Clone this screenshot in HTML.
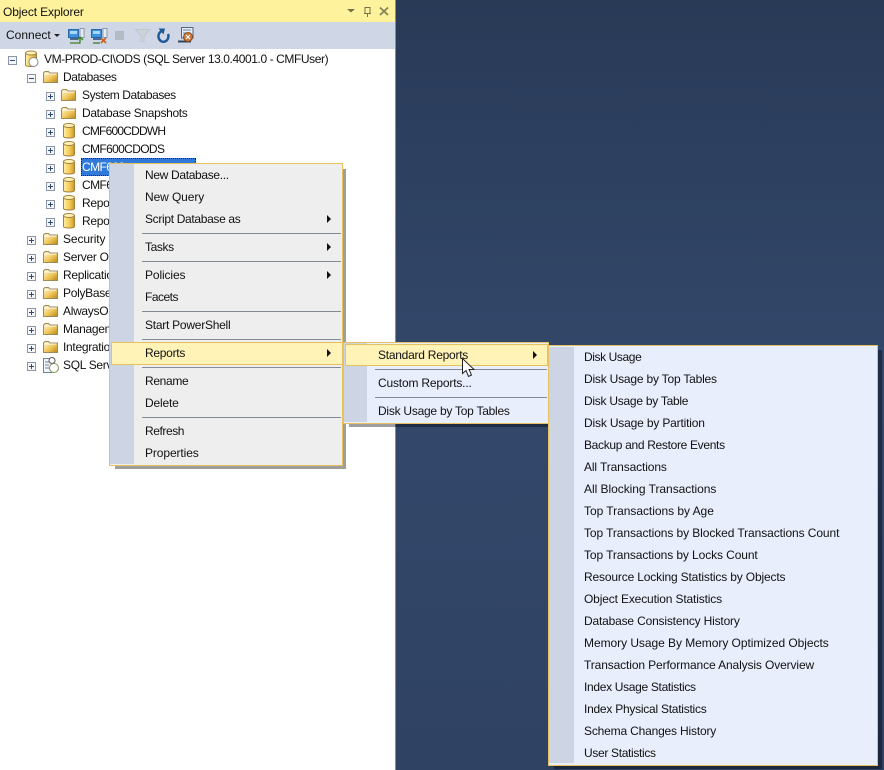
<!DOCTYPE html>
<html><head><meta charset="utf-8">
<style>
html,body{margin:0;padding:0}
body{width:884px;height:770px;overflow:hidden;position:relative;background:linear-gradient(#293a57,#33486b 50%,#2f4263);font:12px/16px "Liberation Sans",sans-serif;color:#111}
div{position:absolute}
.t{white-space:nowrap;position:absolute}
.sep{position:absolute;height:1px;background:#858b96}
.menu{position:absolute;border:1px solid #e8c15f;box-sizing:border-box}
.strip{position:absolute;background:#cdd5e4}
.arr{position:absolute;width:0;height:0;border-left:4px solid #111;border-top:4px solid transparent;border-bottom:4px solid transparent}
.sh{position:absolute;background:rgba(0,0,0,.38)}
svg{position:absolute;overflow:visible}
</style></head><body>
<svg width="0" height="0" style="position:absolute"><defs>
<linearGradient id="fg" x1="0" y1="0" x2="1" y2="1"><stop offset="0" stop-color="#fff8d8"/><stop offset=".55" stop-color="#f0c75a"/><stop offset="1" stop-color="#b8861b"/></linearGradient>
<linearGradient id="dg" x1="0" y1="0" x2="1" y2="0"><stop offset="0" stop-color="#fff0a8"/><stop offset=".6" stop-color="#f2c650"/><stop offset="1" stop-color="#c9952a"/></linearGradient>
<g id="folder"><path d="M.5 3V12.500H14.500V3H7L5.500 1.500H2L.5 3Z" fill="url(#fg)" stroke="#a08a55"/><path d="M1.500 4H13.500" stroke="#fff" fill="none"/></g>
<g id="db"><path d="M.5 2.500V13.500C.5 15.500 11.500 15.500 11.500 13.500V2.500Z" fill="url(#dg)" stroke="#a4823c"/><ellipse cx="6" cy="2.500" rx="5.500" ry="2" fill="#fff3b8" stroke="#a4823c"/></g>
<g id="plus" transform="translate(0,2)"><rect x=".5" y=".5" width="8" height="8" fill="#f4f6fa" stroke="#8a96a8"/><path d="M2 4.500H7M4.500 2V7" stroke="#2f4a70"/></g>
<g id="minus" transform="translate(0,2)"><rect x=".5" y=".5" width="8" height="8" fill="#f4f6fa" stroke="#8a96a8"/><path d="M2 4.500H7" stroke="#2f4a70"/></g>
<g id="srv"><rect x=".5" y="1.500" width="10" height="8" fill="#3e93e0" stroke="#2a66a8"/><rect x="2" y="3" width="7" height="3" fill="#a8d6f7"/><path d="M2 11H10" stroke="#4a6a92" stroke-width="2"/><rect x="12" y=".5" width="4" height="9" fill="#e6ecf3" stroke="#8a98ac"/></g>
</defs></svg>

<!-- left panel -->
<div style="left:0;top:0;width:395px;height:770px;background:#fff"></div>
<div style="left:395px;top:0;width:1px;height:770px;background:#7f8ea6"></div>
<div style="left:0;top:0;width:395px;height:22px;background:#fff29d"></div>
<div style="left:0;top:22px;width:395px;height:27px;background:#cfd6e5"></div>
<span class="t" style="left:3px;top:4px;letter-spacing:-.13px">Object Explorer</span>
<svg style="left:0;top:0" width="395" height="49">
<path d="M347 9H355L351 12.500Z" fill="#76734a"/>
<path d="M365 7.500H370V13.500H365ZM364 13.500H371M367.500 14V17" fill="none" stroke="#76734a"/>
<path d="M380 7.500L388 15M388 7.500L380 15" stroke="#84815c" stroke-width="1.800"/>
<path d="M54 34H60L57 37Z" fill="#222"/>
<use href="#srv" x="68" y="28"/><path d="M70 43H80V38M77 40L80 37L83 40" fill="none" stroke="#3e7d24" stroke-width="1.300"/>
<use href="#srv" x="91" y="28"/><path d="M93 43H100" stroke="#3e7d24" stroke-width="1.300"/><path d="M101 38L106 43M106 38L101 43" stroke="#c9601c" stroke-width="1.600"/>
<rect x="115" y="31" width="9" height="9" fill="#b4bac6"/>
<path d="M135.500 29.500H149.500L144 36V41.500H141V36Z" fill="#cdd1d8" stroke="#c2c6ce"/>
<path d="M168 34A5 5.500 0 1 1 162 31" fill="none" stroke="#1e5a98" stroke-width="2.400"/><path d="M158.500 28.500L165 28.500L163.500 34.500Z" fill="#1e5a98"/>
<path d="M181.500 27.500H193V38H181.500Z" fill="#e6ecf4" stroke="#567"/><path d="M183 30H191M183 33H191" stroke="#6d87a8"/><path d="M178 41.500H191" stroke="#345" stroke-width="2"/><circle cx="188" cy="37" r="4.500" fill="#c97a3c" stroke="#8b4c1e"/><path d="M186 35L190 39M190 35L186 39" stroke="#fff"/>
</svg>
<span class="t" style="left:6px;top:27px">Connect</span>

<!-- tree -->
<svg style="left:0;top:0" width="120" height="380">
<use href="#minus" x="8" y="54"/>
<path d="M25.500 53V65C25.500 67 36.500 67 36.500 65V53Z" fill="url(#dg)" stroke="#a4823c"/><ellipse cx="31" cy="53" rx="5.500" ry="2" fill="#fff3b8" stroke="#a4823c"/><circle cx="33.500" cy="62" r="4.500" fill="#fff" stroke="#8b8b8b"/>
<use href="#minus" x="27" y="72"/><use href="#folder" x="43" y="70"/>
<use href="#plus" x="46" y="90"/><use href="#folder" x="61" y="88"/>
<use href="#plus" x="46" y="108"/><use href="#folder" x="61" y="106"/>
<use href="#plus" x="46" y="126"/><use href="#db" x="63" y="123"/>
<use href="#plus" x="46" y="144"/><use href="#db" x="63" y="141"/>
<use href="#plus" x="46" y="162"/><use href="#db" x="63" y="159"/>
<use href="#plus" x="46" y="180"/><use href="#db" x="63" y="177"/>
<use href="#plus" x="46" y="198"/><use href="#db" x="63" y="195"/>
<use href="#plus" x="46" y="216"/><use href="#db" x="63" y="213"/>
<use href="#plus" x="27" y="234"/><use href="#folder" x="43" y="232"/>
<use href="#plus" x="27" y="252"/><use href="#folder" x="43" y="250"/>
<use href="#plus" x="27" y="270"/><use href="#folder" x="43" y="268"/>
<use href="#plus" x="27" y="288"/><use href="#folder" x="43" y="286"/>
<use href="#plus" x="27" y="306"/><use href="#folder" x="43" y="304"/>
<use href="#plus" x="27" y="324"/><use href="#folder" x="43" y="322"/>
<use href="#plus" x="27" y="342"/><use href="#folder" x="43" y="340"/>
<use href="#plus" x="27" y="360"/>
<path d="M43.500 358.500H52V372.500H43.500Z" fill="#f2f5fa" stroke="#6f8298"/><path d="M45 362H50M45 365H49M45 368H49" stroke="#6f8298"/><circle cx="52" cy="360.500" r="3" fill="#fff" stroke="#555"/><circle cx="54" cy="368" r="4.500" fill="#fff" stroke="#7d9450"/>
</svg>
<span class="t" style="left:44px;top:51px;letter-spacing:-.41px">VM-PROD-CI\ODS (SQL Server 13.0.4001.0 - CMFUser)</span>
<span class="t" style="left:63px;top:69px;letter-spacing:-.44px">Databases</span>
<span class="t" style="left:82px;top:87px;letter-spacing:-.44px">System Databases</span>
<span class="t" style="left:82px;top:105px;letter-spacing:-.33px">Database Snapshots</span>
<span class="t" style="left:82px;top:123px;letter-spacing:-.8px">CMF600CDDWH</span>
<span class="t" style="left:82px;top:141px;letter-spacing:-.64px">CMF600CDODS</span>
<div style="left:81px;top:158px;width:115px;height:18px;box-sizing:border-box;background:#3079d8;border:1px dotted #10223c"></div>
<span class="t" style="left:82px;top:159px;color:#fff;letter-spacing:-.6px">CMF600</span>
<span class="t" style="left:82px;top:177px;letter-spacing:-.6px">CMF600</span>
<span class="t" style="left:82px;top:195px;letter-spacing:-.3px">ReportServer</span>
<span class="t" style="left:82px;top:213px;letter-spacing:-.3px">ReportServer</span>
<span class="t" style="left:63px;top:231px;letter-spacing:-.12px">Security</span>
<span class="t" style="left:63px;top:249px;letter-spacing:-.3px">Server Objects</span>
<span class="t" style="left:63px;top:267px;letter-spacing:-.3px">Replication</span>
<span class="t" style="left:63px;top:285px;letter-spacing:-.3px">PolyBase</span>
<span class="t" style="left:63px;top:303px;letter-spacing:-.3px">AlwaysOn</span>
<span class="t" style="left:63px;top:321px;letter-spacing:-.3px">Management</span>
<span class="t" style="left:63px;top:339px;letter-spacing:-.3px">Integration</span>
<span class="t" style="left:63px;top:357px;letter-spacing:-.3px">SQL Server</span>

<!-- shadows -->
<div class="sh" style="left:115px;top:466px;width:231px;height:3px"></div>
<div class="sh" style="left:343px;top:169px;width:3px;height:297px"></div>
<div class="sh" style="left:349px;top:424px;width:202px;height:3px"></div>
<div class="sh" style="left:554px;top:766px;width:328px;height:3px"></div>
<div class="sh" style="left:878px;top:350px;width:4px;height:416px"></div>

<!-- main menu -->
<div class="menu" style="left:109px;top:163px;width:234px;height:303px;background:#eeeeee"></div>
<div class="strip" style="left:110px;top:164px;width:24px;height:300px"></div>
<span class="t" style="left:145px;top:167px;letter-spacing:-.33px">New Database...</span>
<span class="t" style="left:145px;top:189px;letter-spacing:-.1px">New Query</span>
<span class="t" style="left:145px;top:211px;letter-spacing:-.33px">Script Database as</span><div class="arr" style="left:327px;top:215px"></div>
<div class="sep" style="left:142px;top:233px;width:199px"></div>
<span class="t" style="left:145px;top:239px;letter-spacing:-.4px">Tasks</span><div class="arr" style="left:327px;top:243px"></div>
<div class="sep" style="left:142px;top:261px;width:199px"></div>
<span class="t" style="left:145px;top:267px;letter-spacing:-.12px">Policies</span><div class="arr" style="left:327px;top:271px"></div>
<span class="t" style="left:145px;top:289px;letter-spacing:-.5px">Facets</span>
<div class="sep" style="left:142px;top:311px;width:199px"></div>
<span class="t" style="left:145px;top:317px;letter-spacing:-.25px">Start PowerShell</span>
<div class="sep" style="left:142px;top:339px;width:199px"></div>
<div style="left:111px;top:342px;width:232px;height:23px;box-sizing:border-box;background:#fff3b8;border:1px solid #e8c15f"></div>
<span class="t" style="left:145px;top:345px;letter-spacing:-.28px">Reports</span><div class="arr" style="left:327px;top:349px"></div>
<div class="sep" style="left:142px;top:367px;width:199px"></div>
<span class="t" style="left:145px;top:373px;letter-spacing:-.33px">Rename</span>
<span class="t" style="left:145px;top:395px;letter-spacing:-.17px">Delete</span>
<div class="sep" style="left:142px;top:417px;width:199px"></div>
<span class="t" style="left:145px;top:423px;letter-spacing:-.43px">Refresh</span>
<span class="t" style="left:145px;top:445px;letter-spacing:-.1px">Properties</span>

<!-- submenu 2 -->
<div class="menu" style="left:343px;top:342px;width:206px;height:82px;background:#e9eefd"></div>
<div class="strip" style="left:344px;top:343px;width:23px;height:79px"></div>
<div style="left:345px;top:344px;width:203px;height:22px;box-sizing:border-box;background:#fff3b8;border:1px solid #e8c15f"></div>
<span class="t" style="left:378px;top:347px;letter-spacing:-.25px">Standard Reports</span><div class="arr" style="left:533px;top:351px"></div>
<div class="sep" style="left:375px;top:369px;width:172px"></div>
<span class="t" style="left:378px;top:375px;letter-spacing:-.18px">Custom Reports...</span>
<div class="sep" style="left:375px;top:397px;width:172px"></div>
<span class="t" style="left:378px;top:403px;letter-spacing:-.25px">Disk Usage by Top Tables</span>

<!-- submenu 3 -->
<div class="menu" style="left:548px;top:345px;width:330px;height:421px;background:#e9eefd"></div>
<div class="strip" style="left:549px;top:347px;width:25px;height:416px"></div>
<span class="t" style="left:584px;top:349px;letter-spacing:-.4px">Disk Usage</span>
<span class="t" style="left:584px;top:371px;letter-spacing:-.2px">Disk Usage by Top Tables</span>
<span class="t" style="left:584px;top:393px;letter-spacing:-.26px">Disk Usage by Table</span>
<span class="t" style="left:584px;top:415px;letter-spacing:-.17px">Disk Usage by Partition</span>
<span class="t" style="left:584px;top:437px;letter-spacing:-.32px">Backup and Restore Events</span>
<span class="t" style="left:584px;top:459px;letter-spacing:-.12px">All Transactions</span>
<span class="t" style="left:584px;top:481px;letter-spacing:-.04px">All Blocking Transactions</span>
<span class="t" style="left:584px;top:503px;letter-spacing:-.04px">Top Transactions by Age</span>
<span class="t" style="left:584px;top:525px;letter-spacing:-.09px">Top Transactions by Blocked Transactions Count</span>
<span class="t" style="left:584px;top:547px;letter-spacing:-.1px">Top Transactions by Locks Count</span>
<span class="t" style="left:584px;top:569px;letter-spacing:-.16px">Resource Locking Statistics by Objects</span>
<span class="t" style="left:584px;top:591px;letter-spacing:-.15px">Object Execution Statistics</span>
<span class="t" style="left:584px;top:613px;letter-spacing:-.18px">Database Consistency History</span>
<span class="t" style="left:584px;top:635px;letter-spacing:-.05px">Memory Usage By Memory Optimized Objects</span>
<span class="t" style="left:584px;top:657px;letter-spacing:-.12px">Transaction Performance Analysis Overview</span>
<span class="t" style="left:584px;top:679px;letter-spacing:-.32px">Index Usage Statistics</span>
<span class="t" style="left:584px;top:701px;letter-spacing:-.25px">Index Physical Statistics</span>
<span class="t" style="left:584px;top:723px;letter-spacing:-.18px">Schema Changes History</span>
<span class="t" style="left:584px;top:745px;letter-spacing:-.33px">User Statistics</span>

<!-- cursor -->
<svg style="left:0;top:0" width="884" height="770">
<path d="M462.500 358.500V373.500L466 370.500L468.500 376.500L471.500 375L469 369.500H474Z" fill="#fff" stroke="#222"/>
</svg>
</body></html>
